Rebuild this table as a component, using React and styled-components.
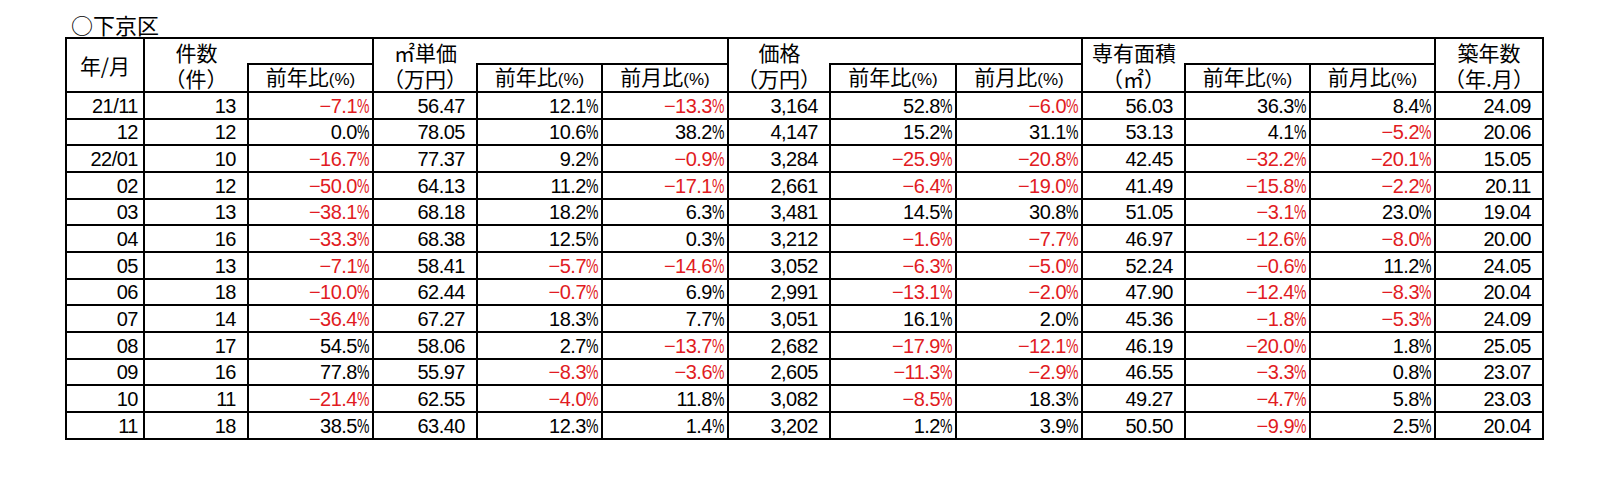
import React from "react";
import styled, { createGlobalStyle } from "styled-components";

const GlobalStyle = createGlobalStyle`
  body {
    margin: 0;
    background: #fff;
  }
`;

const rows = [
  ["21/11", "13", "-7.1", "56.47", "12.1", "-13.3", "3,164", "52.8", "-6.0", "56.03", "36.3", "8.4", "24.09"],
  ["12", "12", "0.0", "78.05", "10.6", "38.2", "4,147", "15.2", "31.1", "53.13", "4.1", "-5.2", "20.06"],
  ["22/01", "10", "-16.7", "77.37", "9.2", "-0.9", "3,284", "-25.9", "-20.8", "42.45", "-32.2", "-20.1", "15.05"],
  ["02", "12", "-50.0", "64.13", "11.2", "-17.1", "2,661", "-6.4", "-19.0", "41.49", "-15.8", "-2.2", "20.11"],
  ["03", "13", "-38.1", "68.18", "18.2", "6.3", "3,481", "14.5", "30.8", "51.05", "-3.1", "23.0", "19.04"],
  ["04", "16", "-33.3", "68.38", "12.5", "0.3", "3,212", "-1.6", "-7.7", "46.97", "-12.6", "-8.0", "20.00"],
  ["05", "13", "-7.1", "58.41", "-5.7", "-14.6", "3,052", "-6.3", "-5.0", "52.24", "-0.6", "11.2", "24.05"],
  ["06", "18", "-10.0", "62.44", "-0.7", "6.9", "2,991", "-13.1", "-2.0", "47.90", "-12.4", "-8.3", "20.04"],
  ["07", "14", "-36.4", "67.27", "18.3", "7.7", "3,051", "16.1", "2.0", "45.36", "-1.8", "-5.3", "24.09"],
  ["08", "17", "54.5", "58.06", "2.7", "-13.7", "2,682", "-17.9", "-12.1", "46.19", "-20.0", "1.8", "25.05"],
  ["09", "16", "77.8", "55.97", "-8.3", "-3.6", "2,605", "-11.3", "-2.9", "46.55", "-3.3", "0.8", "23.07"],
  ["10", "11", "-21.4", "62.55", "-4.0", "11.8", "3,082", "-8.5", "18.3", "49.27", "-4.7", "5.8", "23.03"],
  ["11", "18", "38.5", "63.40", "12.3", "1.4", "3,202", "1.2", "3.9", "50.50", "-9.9", "2.5", "20.04"],
];

// column kinds: ym = 年/月, num = plain value, pct = percentage
const kinds = ["ym", "num", "pct", "num", "pct", "pct", "num", "pct", "pct", "num", "pct", "pct", "num"];
const widths = [78, 104, 125, 104, 125, 126, 102, 126, 126, 103, 125, 125, 108];

const Page = styled.div`
  padding: 11px 0 0 65px;
  color: #000;
`;

const Title = styled.div`
  font-family: "Noto Sans CJK JP", sans-serif;
  font-size: 22px;
  line-height: 26px;
  height: 26px;
  padding-left: 6px;
`;

const Table = styled.table`
  border-collapse: collapse;
  table-layout: fixed;
  width: 1477px;
`;

const HeadRow = styled.tr`
  height: ${({ $h }) => $h}px;
`;

const BodyRow = styled.tr`
  height: 26.67px;
`;

const Th = styled.th`
  font-family: "Noto Sans CJK JP", sans-serif;
  font-weight: normal;
  font-size: 21px;
  line-height: 22px;
  text-align: center;
  vertical-align: middle;
  padding: 0;
  white-space: nowrap;
  border: 2px solid #000;
  ${({ $openTop }) => $openTop && "border-top: none;"}
  ${({ $openBottom }) => $openBottom && "border-bottom: none;"}
  ${({ $openLeft }) => $openLeft && "border-left: none;"}
  ${({ $openRight }) => $openRight && "border-right: none;"}
`;

const Unit = styled.span`
  font-family: "Liberation Sans", sans-serif;
  font-size: 17px;
`;

const Td = styled.td`
  font-family: "Liberation Sans", sans-serif;
  font-size: 20px;
  letter-spacing: -0.5px;
  line-height: 22px;
  text-align: right;
  vertical-align: middle;
  white-space: nowrap;
  overflow: hidden;
  border: 2px solid #000;
  padding: 1px ${({ $kind }) => ($kind === "pct" ? 3 : $kind === "ym" ? 5 : 11)}px 0 0;
  color: ${({ $neg }) => ($neg ? "#e11b22" : "#000")};
`;

const Percent = styled.span`
  display: inline-block;
  width: 12px;
  transform: scaleX(0.7);
  transform-origin: left center;
`;

const Rate = ({ children }) => (
  <>
    {children}
    <Unit>(%)</Unit>
  </>
);

const Cell = ({ value, kind }) => {
  const neg = value.startsWith("-");
  const text = neg ? "\u2212" + value.slice(1) : value;
  return (
    <Td $kind={kind} $neg={neg}>
      {text}
      {kind === "pct" && <Percent>%</Percent>}
    </Td>
  );
};

const App = () => {
  return (
    <Page>
      <GlobalStyle />
      <Title>○下京区</Title>
      <Table>
        <colgroup>
          {widths.map((w, i) => (
            <col key={i} style={{ width: w }} />
          ))}
        </colgroup>
        <thead>
          <HeadRow $h={26}>
            <Th rowSpan={2}>年/月</Th>
            <Th $openBottom $openRight>件数</Th>
            <Th $openLeft />
            <Th $openBottom $openRight>㎡単価</Th>
            <Th $openLeft colSpan={2} />
            <Th $openBottom $openRight>価格</Th>
            <Th $openLeft colSpan={2} />
            <Th $openBottom $openRight>専有面積</Th>
            <Th $openLeft colSpan={2} />
            <Th $openBottom>築年数</Th>
          </HeadRow>
          <HeadRow $h={27}>
            <Th $openTop>（件）</Th>
            <Th><Rate>前年比</Rate></Th>
            <Th $openTop>（万円）</Th>
            <Th><Rate>前年比</Rate></Th>
            <Th><Rate>前月比</Rate></Th>
            <Th $openTop>（万円）</Th>
            <Th><Rate>前年比</Rate></Th>
            <Th><Rate>前月比</Rate></Th>
            <Th $openTop>（㎡）</Th>
            <Th><Rate>前年比</Rate></Th>
            <Th><Rate>前月比</Rate></Th>
            <Th $openTop>（年.月）</Th>
          </HeadRow>
        </thead>
        <tbody>
          {rows.map((row) => (
            <BodyRow key={row[0]}>
              {row.map((v, i) => (
                <Cell key={i} value={v} kind={kinds[i]} />
              ))}
            </BodyRow>
          ))}
        </tbody>
      </Table>
    </Page>
  );
};

export default App;
